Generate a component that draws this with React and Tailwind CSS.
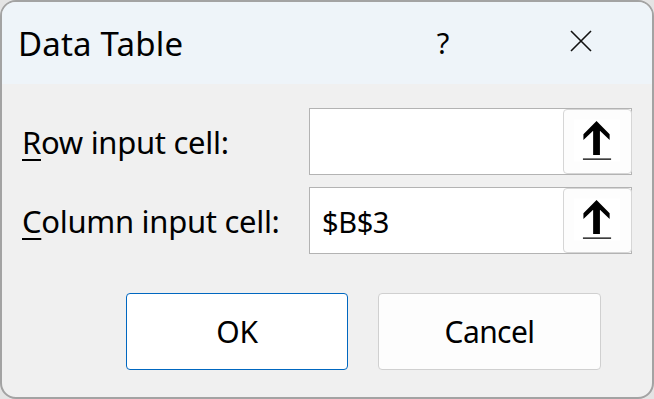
export default function App() {
  return (
    <div className="w-[654px] h-[399px] bg-[#e4e4e4]" style={{ fontFamily: '"Noto Sans", "Open Sans", sans-serif' }}>
      <div className="w-full h-full flex flex-col border-2 border-[#a3a3a3] rounded-[16px] overflow-hidden bg-[#f0f0f0] text-black">
        {/* title bar */}
        <div className="h-[82px] shrink-0 flex items-center bg-[#eef4f9] pl-[16px]">
          <div className="text-[33px] leading-none tracking-[0.2px]">Data Table</div>
          <div className="ml-auto w-[28px] text-center text-[29px] leading-none mr-[113px] -mt-[2px]">?</div>
          <svg width="22" height="22" viewBox="0 0 22 22" className="mr-[60px] -mt-[4px]">
            <path d="M1 1 L21 21 M21 1 L1 21" stroke="#111" strokeWidth="1.6" fill="none" />
          </svg>
        </div>

        {/* body */}
        <div className="flex-1 flex flex-col pl-[20px] pr-[20px] pt-[24px]">
          <Row label="Row input cell:" accel="R" value="" />
          <div className="h-[12px]" />
          <Row label="Column input cell:" accel="C" value="$B$3" />

          <div className="flex justify-end gap-[30px] mt-[39px] pr-[31px]">
            <button className="w-[222px] h-[77px] bg-white border border-[#0067c0] rounded-[4px] text-[30px] tracking-[-0.3px]">
              OK
            </button>
            <button className="w-[223px] h-[77px] bg-[#fdfdfd] border border-[#d0d0d0] rounded-[4px] text-[30px] tracking-[-0.6px]">
              Cancel
            </button>
          </div>
        </div>
      </div>
    </div>
  );
}

function Row({ label, accel, value }) {
  const rest = label.slice(1);
  return (
    <div className="flex items-center h-[67px]">
      <div className="w-[287px] shrink-0 text-[31px] leading-none tracking-[-0.3px] mt-[1px]">
        <span className="underline decoration-2 underline-offset-[5px]">{accel}</span>
        {rest}
      </div>
      <div className="flex-1 h-full flex bg-white border border-[#b3b3b3]">
        <div className="flex-1 flex items-center pl-[12px] text-[29px] leading-none tracking-[-0.4px] mt-[1px]">{value}</div>
        <div className="w-[69px] h-[65px] -mr-[1px] bg-[#fdfdfd] border border-[#d6d6d6] rounded-[4px] flex items-center justify-center">
          <svg width="69" height="65" viewBox="0 0 69 65">
            <rect x="10" y="10" width="48" height="43" fill="#ffffff" />
            <path
              d="M33.5 11.5 L20 25 L20 31 L30 21.5 L30 46.5 L37 46.5 L37 21.5 L47 31 L47 25 Z"
              fill="#000"
            />
            <rect x="19.5" y="50" width="29" height="1.3" fill="#000" />
          </svg>
        </div>
      </div>
    </div>
  );
}
